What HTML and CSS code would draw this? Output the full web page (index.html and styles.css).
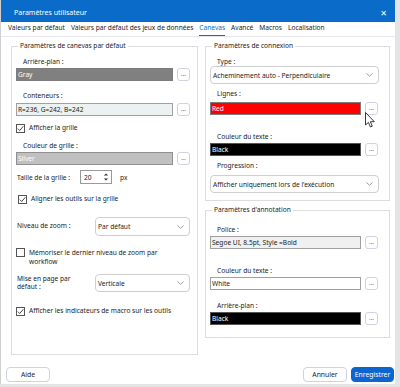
FILE: index.html
```html
<!DOCTYPE html>
<html lang="fr">
<head>
    <meta charset="UTF-8">
    <meta name="viewport" content="width=device-width, initial-scale=1.0">
    <title>Paramètres utilisateur</title>
    <link rel="stylesheet" href="styles.css">
</head>
<body>
<div class="window">
    <div class="titlebar">
        <span class="title">Paramètres utilisateur</span>
        <span class="close">&#x2715;</span>
    </div>

    <div class="tabs">
        <span class="tab">Valeurs par défaut</span>
        <span class="tab">Valeurs par défaut des jeux de données</span>
        <span class="tab active">Canevas</span>
        <span class="tab">Avancé</span>
        <span class="tab">Macros</span>
        <span class="tab">Localisation</span>
    </div>

    <div class="content">
        <fieldset class="group group-canvas">
            <legend>Paramètres de canevas par défaut</legend>

            <div class="label l-first">Arrière-plan :</div>
            <div class="color-row">
                <div class="swatch sw-gray">Gray</div>
                <button class="dots">...</button>
            </div>

            <div class="label l-cont">Conteneurs :</div>
            <div class="color-row r-cont">
                <div class="swatch sw-cont">R=236, G=242, B=242</div>
                <button class="dots">...</button>
            </div>

            <label class="check c-grid">
                <span class="box"><svg width="9" height="9" viewBox="0 0 9 9"><path d="M1.8 4.6 L3.7 6.5 L7.3 2.3" fill="none" stroke="#333" stroke-width="0.9"/></svg></span>
                Afficher la grille
            </label>

            <div class="label l-gridc">Couleur de grille :</div>
            <div class="color-row">
                <div class="swatch sw-silver">Silver</div>
                <button class="dots">...</button>
            </div>

            <div class="size-row">
                <span class="size-label">Taille de la grille :</span>
                <div class="spinner">
                    <span>20</span>
                    <svg class="spin-arrows" width="6" height="10" viewBox="0 0 6 10"><path d="M0.8 3.6 L3 1.4 L5.2 3.6 Z M0.8 6.4 L3 8.6 L5.2 6.4 Z" fill="#333"/></svg>
                </div>
                <span class="unit">px</span>
            </div>

            <label class="check c-align">
                <span class="box"><svg width="9" height="9" viewBox="0 0 9 9"><path d="M1.8 4.6 L3.7 6.5 L7.3 2.3" fill="none" stroke="#333" stroke-width="0.9"/></svg></span>
                Aligner les outils sur la grille
            </label>

            <div class="select-row s-zoom">
                <span class="select-label">Niveau de zoom :</span>
                <div class="select">
                    <span>Par défaut</span>
                    <svg width="7" height="4" viewBox="0 0 7 4"><path d="M0.5 0.5 L3.5 3.3 L6.5 0.5" fill="none" stroke="#888" stroke-width="0.8"/></svg>
                </div>
            </div>

            <label class="check c-memo">
                <span class="box"></span>
                <span>Mémoriser le dernier niveau de zoom par<br>workflow</span>
            </label>

            <div class="select-row s-layout">
                <span class="select-label">Mise en page par<br>défaut :</span>
                <div class="select">
                    <span>Verticale</span>
                    <svg width="7" height="4" viewBox="0 0 7 4"><path d="M0.5 0.5 L3.5 3.3 L6.5 0.5" fill="none" stroke="#888" stroke-width="0.8"/></svg>
                </div>
            </div>

            <label class="check c-macro">
                <span class="box"><svg width="9" height="9" viewBox="0 0 9 9"><path d="M1.8 4.6 L3.7 6.5 L7.3 2.3" fill="none" stroke="#333" stroke-width="0.9"/></svg></span>
                Afficher les indicateurs de macro sur les outils
            </label>
        </fieldset>

        <div class="column">
            <fieldset class="group group-link">
                <legend>Paramètres de connexion</legend>

                <div class="label l-first l-type">Type :</div>
                <div class="select wide">
                    <span>Acheminement auto - Perpendiculaire</span>
                    <svg width="7" height="4" viewBox="0 0 7 4"><path d="M0.5 0.5 L3.5 3.3 L6.5 0.5" fill="none" stroke="#888" stroke-width="0.8"/></svg>
                </div>

                <div class="label l-lines">Lignes :</div>
                <div class="color-row r-lines">
                    <div class="swatch sw-red">Red</div>
                    <button class="dots">...</button>
                </div>

                <div class="label l-txt">Couleur du texte :</div>
                <div class="color-row">
                    <div class="swatch sw-black">Black</div>
                    <button class="dots">...</button>
                </div>

                <div class="label l-prog">Progression :</div>
                <div class="select wide s-prog">
                    <span>Afficher uniquement lors de l'exécution</span>
                    <svg width="7" height="4" viewBox="0 0 7 4"><path d="M0.5 0.5 L3.5 3.3 L6.5 0.5" fill="none" stroke="#888" stroke-width="0.8"/></svg>
                </div>
            </fieldset>

            <fieldset class="group group-note">
                <legend>Paramètres d'annotation</legend>

                <div class="label l-font">Police :</div>
                <div class="color-row">
                    <div class="swatch sw-font">Segoe UI, 8.5pt, Style =Bold</div>
                    <button class="dots">...</button>
                </div>

                <div class="label l-ntxt">Couleur du texte :</div>
                <div class="color-row">
                    <div class="swatch sw-white">White</div>
                    <button class="dots">...</button>
                </div>

                <div class="label l-nbg">Arrière-plan :</div>
                <div class="color-row">
                    <div class="swatch sw-black">Black</div>
                    <button class="dots">...</button>
                </div>
            </fieldset>
        </div>
    </div>

    <div class="footer">
        <button class="btn btn-help">Aide</button>
        <div class="footer-right">
            <button class="btn">Annuler</button>
            <button class="btn btn-primary">Enregistrer</button>
        </div>
    </div>

    <svg class="cursor" width="11" height="17" viewBox="0 0 11 17"><path d="M0.5 0.5 L0.5 13 L3.4 10.4 L5.4 15 L7.3 14.2 L5.4 9.7 L9.3 9.7 Z" fill="#fff" stroke="#222" stroke-width="0.9" stroke-linejoin="round"/></svg>
</div>
</body>
</html>
```

FILE: styles.css
```css
* { box-sizing: border-box; }
body { margin: 0; background: #e4e4e4; font-family: "Noto Sans", "DejaVu Sans", sans-serif; font-size: 6.6px; color: #1b1b1b; }

.window { position: relative; width: 395px; height: 384px; background: #fff; border-left: 1px solid #cfcfcf; }

.titlebar { height: 22px; background: #0b6bc8; color: #fff; display: flex; align-items: center; justify-content: space-between; padding: 3px 8px 0 13px; font-size: 7px; }
.close { font-size: 8px; font-weight: bold; }

.tabs { height: 15px; display: flex; align-items: flex-end; gap: 6px; padding-left: 7px; border-bottom: 1px solid #e6e6ee; }
.tab { line-height: 12px; height: 14px; }
.tab.active { color: #0b6bc8; border-bottom: 1px solid #0b6bc8; }

.content { display: flex; gap: 7px; padding: 4px 0 0 10px; }
.group { margin: 0; border: 1px solid #dddddd; min-width: 0; }
.group legend { padding: 0 2px; margin-left: 2px; line-height: 10px; }
.group-canvas { width: 187px; height: 314px; padding: 0 4px 0 4px; }
.group-canvas .dots { margin-right: 3px; }
.column { display: flex; flex-direction: column; gap: 4px; }
.group-link { width: 185px; padding: 0 4px 7px 4px; }
.group-note { width: 185px; padding: 0 4px 12px 4px; }

.label { padding-left: 7px; line-height: 10px; height: 10px; }
.l-first { margin-top: 6px; }
.l-cont { margin-top: 10px; }
.l-gridc { margin-top: 8px; }
.l-type { height: 9px; line-height: 9px; }
.l-lines { margin-top: 5px; }
.l-txt { margin-top: 17px; }
.l-prog { margin-top: 5px; }
.l-font { margin-top: 10px; }
.l-ntxt { margin-top: 17px; }
.l-nbg { margin-top: 11px; }

.color-row { display: flex; align-items: center; gap: 4px; margin-top: 1px; }
.r-cont { margin-top: 2px; }
.r-lines { margin-top: 3px; }
.swatch { flex: 1; height: 13px; line-height: 11px; padding-left: 1px; border: 1px solid #7c7c7c; white-space: nowrap; overflow: hidden; }
.sw-gray { background: #808080; color: #fff; }
.sw-cont { background: rgb(236, 242, 242); border-color: #a0a0a0; }
.sw-silver { background: #c0c0c0; color: #fff; border-color: #909090; }
.sw-red { background: #ff0000; color: #fff; }
.sw-black { background: #000; color: #fff; border-color: #555; }
.sw-font { background: #f0f0f0; border-color: #a0a0a0; }
.sw-white { background: #fff; border-color: #a0a0a0; }

.dots { width: 13px; height: 13px; flex: none; padding: 0; margin-right: 7px; background: #fff; border: 1px solid #cdd3e0; border-radius: 3px; font: inherit; font-size: 6px; line-height: 9px; color: #333; }

.check { display: flex; align-items: flex-start; gap: 4px; line-height: 10px; padding-left: 0; }
.check .box { width: 9px; height: 9px; flex: none; margin-top: 0.5px; border: 1px solid #555; display: flex; align-items: center; justify-content: center; }
.check .box svg { display: block; margin: -1px; }
.c-grid { margin-top: 7px; }
.c-align { margin-top: 10px; padding-left: 2px; }
.c-memo { margin-top: 12px; line-height: 9px; }
.c-memo .box { margin-top: 0; }
.c-macro { margin-top: 14px; }

.size-row { display: flex; align-items: center; margin-top: 5px; height: 14px; padding-left: 1px; }
.size-label { width: 63px; }
.spinner { width: 32px; height: 14px; border: 1px solid #9a9a9a; display: flex; align-items: center; justify-content: space-between; padding: 0 2px 0 3px; }
.unit { margin-left: 8px; }

.select-row { display: flex; align-items: center; padding-left: 1px; }
.select-row .select-label { width: 78px; line-height: 8.5px; }
.s-zoom { margin-top: 13px; height: 19px; }
.s-zoom .select { height: 19px; }
.s-layout { margin-top: 8px; height: 18px; }
.select { width: 95px; height: 18px; border: 1px solid #cfcfcf; border-radius: 4px; display: flex; align-items: center; justify-content: space-between; padding: 0 5px 0 2px; }
.select.wide { width: 169px; }
.s-prog { margin-top: 4px; }

.footer { display: flex; justify-content: space-between; align-items: center; padding: 12px 1px 0 5px; }
.footer-right { display: flex; gap: 4px; }
.btn { height: 15px; width: 44px; padding: 0; font: inherit; font-size: 6.8px; background: #fff; color: #1b1b1b; border: 1px solid #cdd3e0; border-radius: 4px; }
.btn-primary { width: 43px; background: #0b67cf; color: #fff; border-color: #0b67cf; }

.cursor { position: absolute; left: 364px; top: 112px; }
```
